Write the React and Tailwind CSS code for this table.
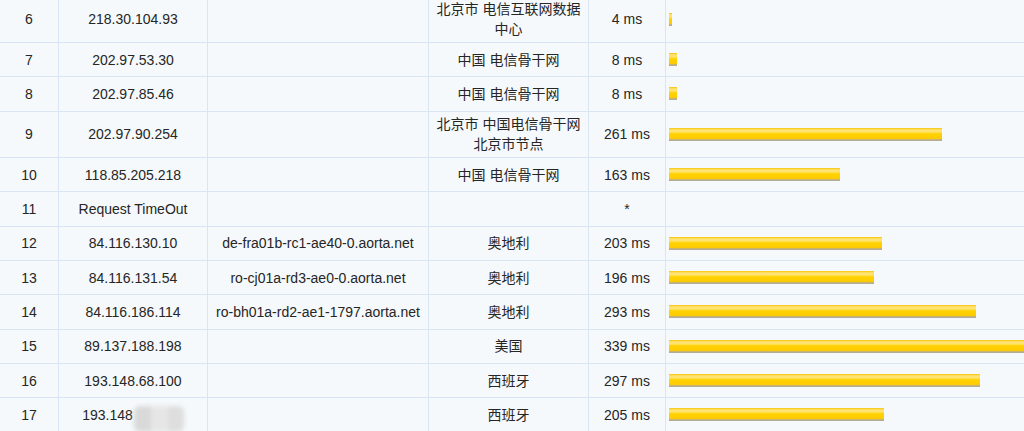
import React from "react";

const hops = [
  { no: 6, ip: "218.30.104.93", host: "", loc: ["北京市 电信互联网数据", "中心"], ms: 4 },
  { no: 7, ip: "202.97.53.30", host: "", loc: ["中国 电信骨干网"], ms: 8 },
  { no: 8, ip: "202.97.85.46", host: "", loc: ["中国 电信骨干网"], ms: 8 },
  { no: 9, ip: "202.97.90.254", host: "", loc: ["北京市 中国电信骨干网", "北京市节点"], ms: 261 },
  { no: 10, ip: "118.85.205.218", host: "", loc: ["中国 电信骨干网"], ms: 163 },
  { no: 11, ip: "Request TimeOut", host: "", loc: [""], ms: null },
  { no: 12, ip: "84.116.130.10", host: "de-fra01b-rc1-ae40-0.aorta.net", loc: ["奥地利"], ms: 203 },
  { no: 13, ip: "84.116.131.54", host: "ro-cj01a-rd3-ae0-0.aorta.net", loc: ["奥地利"], ms: 196 },
  { no: 14, ip: "84.116.186.114", host: "ro-bh01a-rd2-ae1-1797.aorta.net", loc: ["奥地利"], ms: 293 },
  { no: 15, ip: "89.137.188.198", host: "", loc: ["美国"], ms: 339 },
  { no: 16, ip: "193.148.68.100", host: "", loc: ["西班牙"], ms: 297 },
  { no: 17, ip: "193.148", host: "", loc: ["西班牙"], ms: 205, masked: true },
];

const cell =
  "flex items-center justify-center text-center border-r border-[#d9e5f2] py-[2.75px] shrink-0";

function Bar({ ms }) {
  if (ms === null) return null;
  const w = ms <= 4 ? 3 : Math.round(ms * 1.047);
  return (
    <div
      className="h-[13px] bg-[linear-gradient(to_bottom,#f7c600_0%,#ffe27a_15%,#ffe46b_30%,#ffd200_45%,#ffcc00_80%,#c9b46a_88%,#a9a9a9_100%)]"
      style={{ width: w }}
    />
  );
}

export default function App() {
  return (
    <div className="w-[1024px] h-[431px] overflow-hidden bg-[#f5f9fb] text-[14px] text-[#262626] font-['Liberation_Sans','Noto_Sans_CJK_SC',sans-serif]">
      <div className="-mt-[3.5px]">
        {hops.map((h) => (
          <div
            key={h.no}
            className="flex min-h-[34.3px] border-b border-[#d9e5f2] leading-[20px]"
          >
            <div className={`${cell} w-[59px]`}>{h.no}</div>
            <div className={`${cell} w-[149px]`}>
              {h.masked ? (
                <span className="flex items-center">
                  {h.ip}
                  <span className="ml-[1px] inline-flex h-[26px] w-[50px] translate-y-[4px] overflow-hidden rounded-[6px] blur-[2px]">
                    <span className="w-[17px] bg-[#d9d9d9]" />
                    <span className="w-[17px] bg-[#e6e6e6]" />
                    <span className="w-[16px] bg-[#dedede]" />
                  </span>
                </span>
              ) : (
                h.ip
              )}
            </div>
            <div className={`${cell} w-[221px]`}>{h.host}</div>
            <div className={`${cell} w-[160px] flex-col`}>
              {h.loc.map((l, i) => (
                <div key={i}>{l}</div>
              ))}
            </div>
            <div className={`${cell} w-[77px]`}>
              {h.ms === null ? "*" : `${h.ms} ms`}
            </div>
            <div className="flex flex-1 items-center pl-[3px]">
              <Bar ms={h.ms} />
            </div>
          </div>
        ))}
      </div>
    </div>
  );
}
